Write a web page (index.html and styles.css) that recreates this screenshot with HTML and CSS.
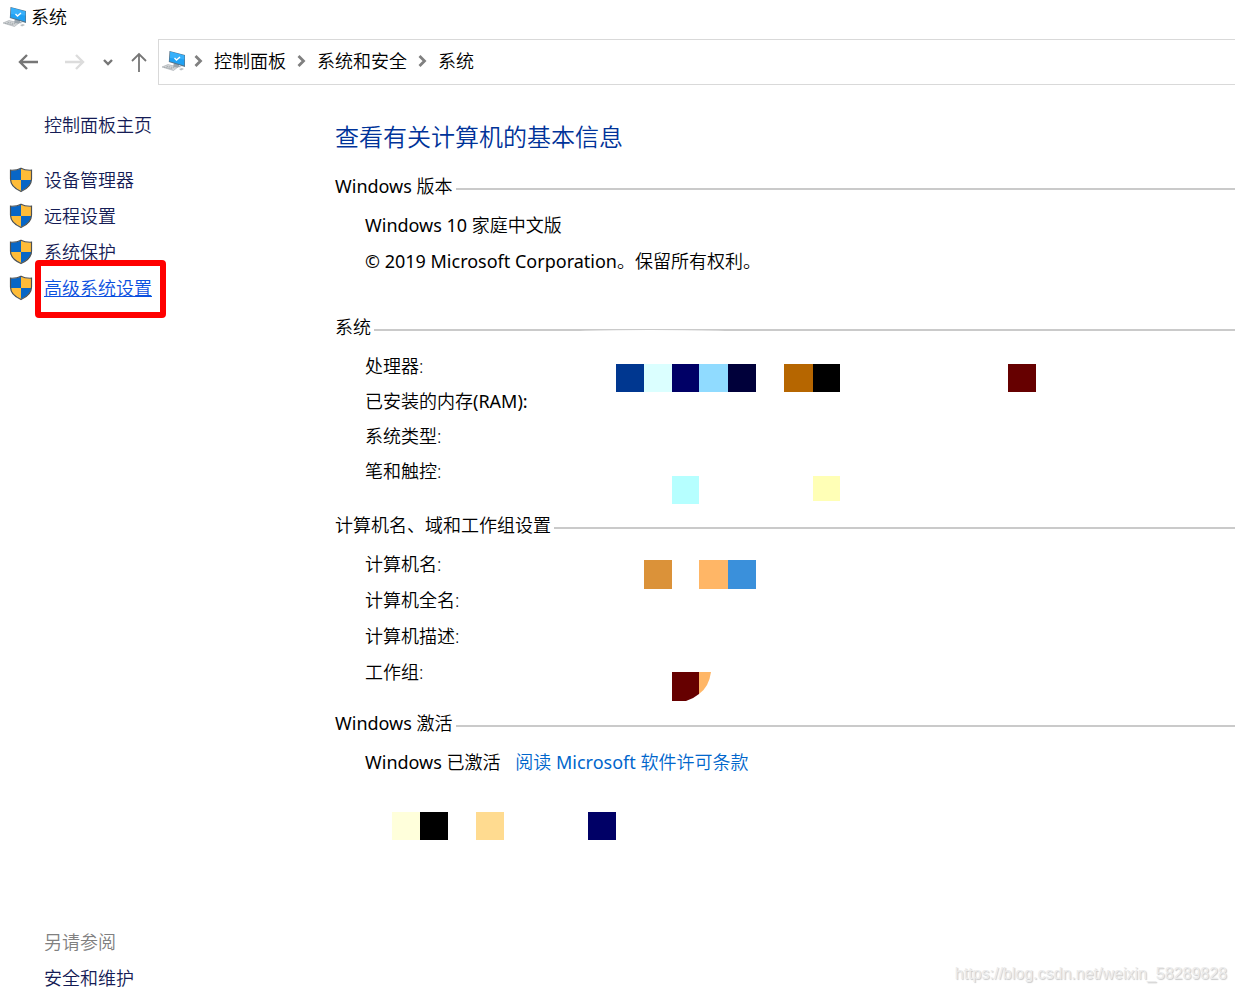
FILE: index.html
```
<!DOCTYPE html>
<html lang="zh-CN">

<head>
    <meta charset="UTF-8">
    <meta name="viewport" content="width=device-width, initial-scale=1.0">
    <title>系统</title>
    <link rel="stylesheet" href="styles.css">
</head>

<body>
    <svg class="sprite" aria-hidden="true">
        <symbol id="computer" viewBox="0 0 24 22">
            <path d="M0 17l6-2.500 10 2.500-4.500 3.500z" fill="#d5d8da" stroke="#a2a8ac" stroke-width=".6" />
            <path d="M2 17.200l9 1.800M4.500 16.200l8.500 1.800" stroke="#8f969b" stroke-width=".7" stroke-dasharray="1.5 .7" />
            <path d="M17 19l3-1 2 1-3 1.500z" fill="#b9bec1" />
            <path d="M12 13l5 1v2l3 1-6 .5-3-1z" fill="#9ba5ad" />
            <path d="M7.500 1l15.500 4v12L6.800 12z" fill="#58758a" />
            <path d="M8.300 1.800l14 3.800v10L7.500 11.300z" fill="#20a1f3" />
            <path d="M8.300 1.800l14 3.800v4L8 8z" fill="#38b0fa" />
            <path d="M12.500 8l2 2 3.500-3" fill="none" stroke="#fff" stroke-width="1.400" />
        </symbol>
        <symbol id="shield" viewBox="0 0 24 26">
            <path d="M12 1.500Q8 4 1.500 3.500V12q0 8 10.500 12z" fill="#0866c6" />
            <path d="M12 1.500Q16 4 22.500 3.500V12q0 8-10.500 12z" fill="#ffbc38" />
            <path d="M1.500 13H12v11Q2.500 20 1.500 13z" fill="#ffbc38" />
            <path d="M22.500 13H12v11q9.500-4 10.500-11z" fill="#0866c6" />
            <path d="M12 1.200Q8 3.500 1.500 3.200V12q0 8 10.500 12.500Q22.500 20 22.500 12V3.200Q16 3.500 12 1.200z" fill="none" stroke="#4d5052" stroke-width="1.200" />
        </symbol>
        <symbol id="sep" viewBox="0 0 10 14">
            <path d="M2 2l5 5-5 5" fill="none" stroke="#808080" stroke-width="2.800" />
        </symbol>
    </svg>

    <header class="titlebar">
        <svg class="computer"><use href="#computer" /></svg>
        <span>系统</span>
    </header>

    <nav class="toolbar">
        <div class="buttons">
            <button class="back" aria-label="返回">
                <svg width="20" height="18" viewBox="0 0 20 18"><path d="M20 9H2M9 2L2 9l7 7" stroke="#767676" stroke-width="2.400" fill="none" /></svg>
            </button>
            <button class="forward" aria-label="前进" disabled>
                <svg width="20" height="18" viewBox="0 0 20 18"><path d="M0 9h18M11 2l7 7-7 7" stroke="#dcdcdc" stroke-width="2.400" fill="none" /></svg>
            </button>
            <button class="recent" aria-label="最近浏览的位置">
                <svg width="10" height="8" viewBox="0 0 10 8"><path d="M1 2l4 4 4-4" stroke="#767676" stroke-width="2.400" fill="none" /></svg>
            </button>
            <button class="up" aria-label="向上">
                <svg width="16" height="20" viewBox="0 0 16 20"><path d="M8 20V2M1 9l7-7 7 7" stroke="#767676" stroke-width="1.800" fill="none" /></svg>
            </button>
        </div>
        <div class="address">
            <svg class="computer"><use href="#computer" /></svg>
            <svg class="sep"><use href="#sep" /></svg>
            <a href="#">控制面板</a>
            <svg class="sep"><use href="#sep" /></svg>
            <a href="#">系统和安全</a>
            <svg class="sep"><use href="#sep" /></svg>
            <a href="#">系统</a>
        </div>
    </nav>

    <div class="content">
        <aside class="sidebar">
            <a class="home" href="#">控制面板主页</a>
            <ul class="tasks">
                <li><svg class="shield"><use href="#shield" /></svg><a href="#">设备管理器</a></li>
                <li><svg class="shield"><use href="#shield" /></svg><a href="#">远程设置</a></li>
                <li><svg class="shield"><use href="#shield" /></svg><a href="#">系统保护</a></li>
                <li><svg class="shield"><use href="#shield" /></svg><a class="marked" href="#">高级系统设置</a></li>
            </ul>
            <div class="see-also">
                <p>另请参阅</p>
                <a href="#">安全和维护</a>
            </div>
        </aside>

        <main class="info">
            <h1>查看有关计算机的基本信息</h1>

            <section class="edition">
                <h2><span><span class="en">Windows</span> 版本</span></h2>
                <p><span class="en">Windows 10</span> 家庭中文版</p>
                <p><span class="en">© 2019 Microsoft Corporation</span>。保留所有权利。</p>
            </section>

            <section class="system">
                <h2>系统</h2>
                <table>
                    <tr><th scope="row">处理器:</th><td></td></tr>
                    <tr><th scope="row">已安装的内存<span class="en">(RAM):</span></th><td></td></tr>
                    <tr><th scope="row">系统类型:</th><td></td></tr>
                    <tr><th scope="row">笔和触控:</th><td></td></tr>
                </table>
            </section>

            <section class="names">
                <h2>计算机名、域和工作组设置</h2>
                <table>
                    <tr><th scope="row">计算机名:</th><td></td></tr>
                    <tr><th scope="row">计算机全名:</th><td></td></tr>
                    <tr><th scope="row">计算机描述:</th><td></td></tr>
                    <tr><th scope="row">工作组:</th><td></td></tr>
                </table>
            </section>

            <section class="activation">
                <h2><span><span class="en">Windows</span> 激活</span></h2>
                <p><span class="en">Windows</span> 已激活 <a href="#">阅读 <span class="en">Microsoft</span> 软件许可条款</a></p>
            </section>

            <!-- mosaic over the private values -->
            <svg class="mosaic" width="720" height="780" viewBox="0 0 720 780" aria-hidden="true">
                <path d="M245 246q20-1 70-1t75 1z" fill="#fff" />
                <rect x="281" y="279" width="28" height="28" fill="#003790" />
                <rect x="309" y="279" width="28" height="28" fill="#dbffff" />
                <rect x="337" y="279" width="27" height="28" fill="#000066" />
                <rect x="364" y="279" width="29" height="28" fill="#90dbff" />
                <rect x="393" y="279" width="28" height="28" fill="#00003a" />
                <rect x="449" y="279" width="29" height="28" fill="#b66600" />
                <rect x="478" y="279" width="27" height="28" fill="#000" />
                <rect x="673" y="279" width="28" height="28" fill="#660000" />
                <rect x="337" y="391" width="27" height="28" fill="#b6ffff" />
                <rect x="478" y="391" width="27" height="25" fill="#ffffb6" />
                <rect x="309" y="475" width="28" height="29" fill="#db9239" />
                <rect x="364" y="475" width="29" height="29" fill="#ffb666" />
                <rect x="393" y="475" width="28" height="29" fill="#3a90db" />
                <path d="M337 587h27v22q-6 5-13 7h-14z" fill="#660000" />
                <path d="M364 587h12q-2 15-12 22z" fill="#ffb666" />
                <rect x="57" y="727" width="28" height="28" fill="#ffffdb" />
                <rect x="85" y="727" width="28" height="28" fill="#000" />
                <rect x="141" y="727" width="28" height="28" fill="#ffdb90" />
                <rect x="253" y="727" width="28" height="28" fill="#000066" />
            </svg>
        </main>
    </div>

    <div class="watermark">https://blog.csdn.net/weixin_58289828</div>
</body>

</html>
```
FILE: styles.css
```
* {
    padding: 0;
    margin: 0;
    box-sizing: border-box;
}

body {
    display: flex;
    flex-direction: column;
    min-height: 100vh;
    padding-right: 1px;
    position: relative;
    background-color: #fff;
    color: #000;
    font-family: "Noto Sans", "Noto Sans CJK SC", sans-serif;
    font-size: 18px;
    font-weight: 360;
    line-height: 36px;
}

a {
    color: inherit;
    text-decoration: none;
}

/* latin text looks thinner than the chinese at the same weight */
.en {
    font-weight: 400;
}

.sprite {
    display: none;
}

.computer {
    width: 24px;
    height: 22px;
}

/* title and address bar */
.titlebar {
    display: flex;
    align-items: center;
    gap: 4px;
    height: 39px;
    padding: 0 0 6px 3px;
}

.toolbar {
    display: flex;
    height: 46px;
}

.buttons {
    display: flex;
    align-items: center;
    width: 158px;
    padding-left: 18px;
}

.buttons button {
    display: flex;
    background: none;
    border: none;
}

.forward {
    margin-left: 27px;
}

.recent {
    margin-left: 18px;
}

.up {
    margin-left: 18px;
}

.address {
    flex: 1;
    display: flex;
    align-items: center;
    padding: 0 0 2px 3px;
    border: 1px solid #d9d9d9;
    border-right: none;
}

.sep {
    width: 11px;
    height: 14px;
    margin: 0 10px;
}

.address .computer + .sep {
    margin-left: 7px;
}

/* left column */
.content {
    flex: 1;
    display: flex;
}

.sidebar {
    display: flex;
    flex-direction: column;
    width: 335px;
    padding: 22px 0 1px 9px;
    color: #151c55;
}

.home {
    padding-left: 35px;
}

.tasks {
    margin-top: 19px;
    list-style: none;
}

.tasks li {
    display: flex;
    align-items: center;
    gap: 11px;
}

.shield {
    width: 24px;
    height: 26px;
}

.marked {
    position: relative;
    color: #0b50e0;
    text-decoration: underline;
}

.marked::after {
    content: "";
    position: absolute;
    inset: -10px -14px -12px -9px;
    border: 6px solid #f00;
    border-radius: 4px;
}

.see-also {
    display: flex;
    flex-direction: column;
    gap: 10px;
    margin-top: auto;
    padding-left: 35px;
    line-height: 26px;
}

.see-also p {
    color: #808080;
}

/* right column */
.info {
    flex: 1;
    position: relative;
    padding-top: 34px;
}

h1 {
    color: #003399;
    font-size: 24px;
    font-weight: inherit;
}

h2 {
    display: flex;
    align-items: center;
    gap: 3px;
    margin-bottom: 3px;
    font-size: 18px;
    font-weight: inherit;
}

h2::after {
    content: "";
    flex: 1;
    height: 2px;
    margin-top: 5px;
    background-color: #cacaca;
}

.info p,
.info table {
    padding-left: 30px;
}

.info p a {
    margin-left: 10px;
    color: #0066cc;
}

table {
    border-spacing: 0;
}

th {
    font-weight: inherit;
    text-align: left;
}

.edition {
    margin-top: 13px;
}

.system {
    margin-top: 30px;
}

.system table {
    margin-top: 4px;
    line-height: 35px;
}

.names {
    margin-top: 18px;
}

.activation {
    margin-top: 15px;
}

.mosaic {
    position: absolute;
    top: 0;
    left: 0;
    pointer-events: none;
}

.watermark {
    position: absolute;
    right: 9px;
    bottom: 8px;
    color: #ececec;
    font-family: "Liberation Sans", Arial, sans-serif;
    font-size: 16px;
    font-weight: 400;
    line-height: 20px;
    text-shadow: 1px 1px 1px #c8c8c8;
}
```
